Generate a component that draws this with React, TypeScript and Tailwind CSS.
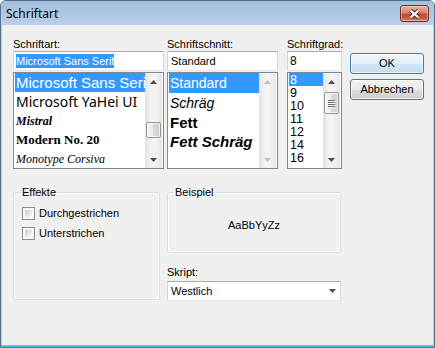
import type { ReactNode } from "react";

const ui = "font-['Liberation_Sans',Arial,sans-serif]";

function Arrow({ dir, disabled }: { dir: "up" | "down"; disabled?: boolean }) {
  return (
    <svg width="7" height="4" viewBox="0 0 7 4">
      <path
        d={dir === "up" ? "M3.5 0L7 4H0Z" : "M0 0H7L3.5 4Z"}
        fill={disabled ? "#c2c2c2" : "#4d4d4d"}
      />
    </svg>
  );
}

function ScrollBar({
  thumb,
  grip,
  disabled,
}: {
  thumb?: string;
  grip?: boolean;
  disabled?: boolean;
}) {
  return (
    <div className="flex h-full w-[17px] shrink-0 flex-col bg-[linear-gradient(to_right,#e3e3e3,#efefef_25%,#f5f5f5_50%,#efefef_75%,#e6e6e6)]">
      <div className="flex h-[17px] items-center justify-center">
        <Arrow dir="up" disabled={disabled} />
      </div>
      <div className="flex-1 px-px">
        {thumb && (
          <div
            className={`${thumb} flex flex-col items-center justify-center gap-[1px] rounded-[2px] border border-[#979797] bg-[linear-gradient(to_right,#f3f3f3,#ececec_50%,#dadada_50%,#d0d0d0)] shadow-[inset_0_0_0_1px_#ffffffb0]`}
          >
            {grip &&
              [0, 1, 2, 3].map((i) => (
                <div key={i} className="h-px w-[7px] bg-[#6d6d6d] shadow-[0_1px_0_#ffffff]" />
              ))}
          </div>
        )}
      </div>
      <div className="flex h-[17px] items-center justify-center">
        <Arrow dir="down" disabled={disabled} />
      </div>
    </div>
  );
}

function TextBox({ children }: { children?: ReactNode }) {
  return (
    <div className="flex h-[20px] items-center overflow-hidden whitespace-nowrap border border-[#abadb3] border-x-[#d5d9df] border-b-[#e3e9ef] bg-white pl-[2px]">
      {children}
    </div>
  );
}

function ListBox({ children, scroll }: { children: ReactNode; scroll: ReactNode }) {
  return (
    <div className="mt-px flex h-[97px] border border-[#828790] bg-white px-px">
      <div className="min-w-0 flex-1 overflow-hidden">{children}</div>
      {scroll}
    </div>
  );
}

function Item({
  children,
  selected,
  className,
}: {
  children: ReactNode;
  selected?: boolean;
  className?: string;
}) {
  return (
    <div
      className={`overflow-hidden whitespace-nowrap pl-px ${
        selected ? "bg-[#3399ff] text-white" : "text-black"
      } ${className ?? ""}`}
    >
      {children}
    </div>
  );
}

function Button({ children, primary }: { children: ReactNode; primary?: boolean }) {
  return (
    <div
      className={`flex h-[21px] items-center justify-center rounded-[3px] border shadow-[inset_0_0_0_1px_#ffffffb0] ${
        primary
          ? "border-[#3c7fb1] bg-[linear-gradient(#edf5fc,#e3eff9_50%,#d2e6f6_50%,#c6def2)]"
          : "border-[#707070] bg-[linear-gradient(#f2f2f2,#ebebeb_50%,#dddddd_50%,#cfcfcf)]"
      }`}
    >
      {children}
    </div>
  );
}

function CheckBox({ label }: { label: string }) {
  return (
    <div className="flex h-[13px] items-center gap-[4px]">
      <div className="h-[13px] w-[13px] border border-[#8e8f8f] bg-[#f7f7f7] p-[2px]">
        <div className="h-full w-full bg-[linear-gradient(135deg,#cfcfcf,#e6e6e6_55%,#f8f8f8)]" />
      </div>
      <span>{label}</span>
    </div>
  );
}

function CloseButton() {
  return (
    <div className="ml-auto mr-[5px] mt-[4px] flex h-[17px] w-[29px] items-center justify-center rounded-[3px] border border-[#6b2f27] bg-[linear-gradient(#eab0a2,#d98370_45%,#c64a33_55%,#c85a40_80%,#de8a67)] shadow-[inset_0_0_0_1px_#ffffff60]">
      <svg width="13" height="10" viewBox="0 0 13 10">
        <path d="M2.5 1.5L10.5 8.5M10.5 1.5L2.5 8.5" stroke="#43302c" strokeWidth="4.2" />
        <path d="M2.5 1.5L10.5 8.5M10.5 1.5L2.5 8.5" stroke="#ffffff" strokeWidth="2.2" />
      </svg>
    </div>
  );
}

const fonts = [
  { name: "Microsoft Sans Serif", cls: "font-['Liberation_Sans',sans-serif] text-[15px]" },
  { name: "Microsoft YaHei UI", cls: "font-['Noto_Sans',sans-serif] text-[14px]" },
  { name: "Mistral", cls: "font-['Liberation_Serif',serif] text-[12px] italic font-semibold" },
  { name: "Modern No. 20", cls: "font-['Liberation_Serif',serif] text-[13px] font-bold" },
  { name: "Monotype Corsiva", cls: "font-['Liberation_Serif',serif] text-[12px] italic" },
];

const styles = [
  { name: "Standard", cls: "h-[20px] leading-[21px] text-[14px]" },
  { name: "Schräg", cls: "h-[19px] leading-[21px] text-[14px] italic" },
  { name: "Fett", cls: "h-[20px] leading-[21px] text-[15px] font-bold" },
  { name: "Fett Schräg", cls: "h-[19px] leading-[19px] text-[15px] font-bold italic" },
];

const sizes = ["8", "9", "10", "11", "12", "14", "16"];

export default function App() {
  return (
    <div className="h-[348px] w-[435px] overflow-hidden bg-white">
      <div className="flex h-full flex-col overflow-hidden rounded-t-[6px] border border-[#52708f] bg-[#b9d1ea]">
        <div className="flex h-[24px] shrink-0 items-start bg-[linear-gradient(#a4bfdd,#b9d0ea)]">
          <span className="pl-[5px] pt-[5px] font-['Noto_Sans',sans-serif] text-[12px] leading-[16px] text-black">
            Schriftart
          </span>
          <CloseButton />
        </div>
        <div className="flex flex-1 flex-col px-px">
          <div className={`flex-1 bg-[#f0f0f0] pl-[11px] pt-[13px] text-[11px] leading-[13px] text-black ${ui}`}>
            <div className="flex">
              <div className="w-[151px]">
                <div className="h-[13px]">Schriftart:</div>
                <TextBox>
                  <span className="bg-[#3399ff] leading-[14px] text-white">Microsoft Sans Serif</span>
                </TextBox>
                <ListBox scroll={<ScrollBar thumb="mt-[32px] h-[16px]" />}>
                  {fonts.map((f, i) => (
                    <Item key={f.name} selected={i === 0} className={`h-[19px] leading-[20px] ${f.cls}`}>
                      {f.name}
                    </Item>
                  ))}
                </ListBox>
              </div>
              <div className="ml-[3px] w-[111px]">
                <div className="h-[13px]">Schriftschnitt:</div>
                <TextBox>
                  <span className="pl-px">Standard</span>
                </TextBox>
                <ListBox scroll={<ScrollBar disabled />}>
                  {styles.map((s, i) => (
                    <Item key={s.name} selected={i === 0} className={`pl-[2px] ${s.cls}`}>
                      {s.name}
                    </Item>
                  ))}
                </ListBox>
              </div>
              <div className="ml-[9px] w-[55px]">
                <div className="h-[13px]">Schriftgrad:</div>
                <TextBox>
                  <span className="text-[12px]">8</span>
                </TextBox>
                <ListBox scroll={<ScrollBar thumb="mt-[2px] h-[22px]" grip />}>
                  {sizes.map((s, i) => (
                    <Item key={s} selected={i === 0} className="h-[13px] text-[12.5px] leading-[14px]">
                      {s}
                    </Item>
                  ))}
                </ListBox>
              </div>
              <div className="ml-[8px] mt-[15px] flex w-[74px] flex-col gap-[5px]">
                <Button primary>OK</Button>
                <Button>Abbrechen</Button>
              </div>
            </div>
            <div className="mt-[17px] flex">
              <fieldset className="h-[114px] w-[147px] rounded-[3px] border border-[#d5dfe5] pl-[8px] shadow-[inset_0_0_0_1px_#ffffff]">
                <legend className="-ml-px px-px leading-[13px]">Effekte</legend>
                <div className="flex flex-col gap-[7px] pt-[8px]">
                  <CheckBox label="Durchgestrichen" />
                  <CheckBox label="Unterstrichen" />
                </div>
              </fieldset>
              <div className="ml-[7px] w-[174px]">
                <fieldset className="h-[67px] rounded-[3px] border border-[#d5dfe5] pl-[7px] shadow-[inset_0_0_0_1px_#ffffff]">
                  <legend className="-ml-px px-px leading-[13px]">Beispiel</legend>
                  <div className="-ml-[7px] flex h-[52px] items-center justify-center">AaBbYyZz</div>
                </fieldset>
                <div className="mt-[13px] h-[13px]">Skript:</div>
                <div className="mt-[2px] flex h-[20px] items-center justify-between border border-[#abadb3] border-x-[#d5d9df] border-b-[#e3e9ef] bg-white pl-[3px] pr-[4px]">
                  <span>Westlich</span>
                  <Arrow dir="down" />
                </div>
              </div>
            </div>
          </div>
        </div>
        <div className="h-[2px] shrink-0 bg-[#45c9e8]" />
      </div>
    </div>
  );
}
